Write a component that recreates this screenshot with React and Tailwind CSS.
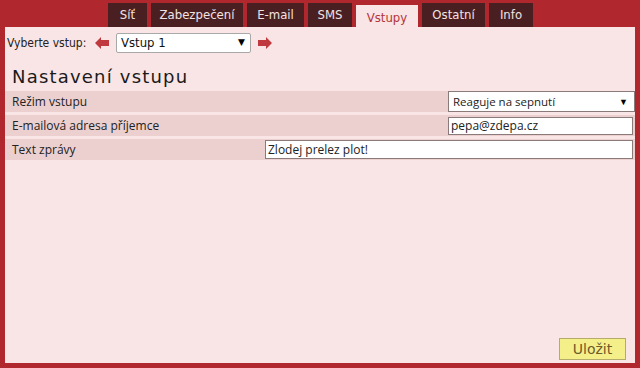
import React from "react";

const tabs = [
  { t: "Síť", w: "w-[39px]" },
  { t: "Zabezpečení", w: "w-[92px]" },
  { t: "E-mail", w: "w-[57px]" },
  { t: "SMS", w: "w-[44px]" },
  { t: "Vstupy", w: "w-[62px]", active: true },
  { t: "Ostatní", w: "w-[63px]" },
  { t: "Info", w: "w-[44px]" },
];

function ArrowLeft() {
  return (
    <svg width="14" height="12" viewBox="0 0 14 12">
      <path d="M0 6 L6 0 L6 3 L14 3 L14 9 L6 9 L6 12 Z" fill="#c0393f" />
    </svg>
  );
}
function ArrowRight() {
  return (
    <svg width="14" height="12" viewBox="0 0 14 12">
      <path d="M14 6 L8 0 L8 3 L0 3 L0 9 L8 9 L8 12 Z" fill="#c0393f" />
    </svg>
  );
}

export default function App() {
  const cond = { fontStretch: "condensed" };
  return (
    <div className="w-[640px] h-[368px] bg-[#b0282e] flex flex-col font-['DejaVu_Sans',sans-serif] text-[#222]">
      <div className="h-[27px] flex items-end pl-[108px] gap-[4px]">
        {tabs.map((x) =>
          x.active ? (
            <div
              key={x.t}
              style={cond}
              className={`${x.w} h-[22px] bg-[#f9e5e5] text-[#b5343c] text-[13px] flex items-center justify-center pt-[3px]`}
            >
              {x.t}
            </div>
          ) : (
            <div
              key={x.t}
              style={cond}
              className={`${x.w} h-[24px] bg-[#4a1f22] text-[#f3e3e3] text-[13px] flex items-center justify-center`}
            >
              {x.t}
            </div>
          )
        )}
      </div>
      <div className="flex-1 mx-[5px] mb-[5px] bg-[#f9e5e5] flex flex-col">
        <div className="flex items-center h-[20px] mt-[6px] pl-[2px]">
          <span style={cond} className="text-[12px] text-[#222] w-[88px]">
            Vyberte vstup:
          </span>
          <ArrowLeft />
          <div className="ml-[7px] w-[135px] h-[20px] bg-white border border-[#a9a9a9] rounded-[2px] flex items-center justify-between pl-[4px] pr-[5px]">
            <span style={cond} className="text-[13px] text-[#111]">Vstup 1</span>
            <span className="text-[9px] text-black">▼</span>
          </div>
          <div className="ml-[7px]">
            <ArrowRight />
          </div>
        </div>
        <div className="mt-[12px] pl-[7px] h-[23px] text-[18px] tracking-[1.2px] text-[#1a1a1a] leading-[23px]">
          Nastavení vstupu
        </div>
        <div className="mt-[3px] flex flex-col gap-[3px] text-[12px] font-['Open_Sans',sans-serif]">
          <div className="h-[21px] bg-[#ecd0d0] flex items-center justify-between pl-[7px]">
            <span>Režim vstupu</span>
            <div className="w-[187px] h-[21px] bg-white border border-[#8a7a7a] flex items-center justify-between pl-[4px] pr-[6px] text-[11.5px]">
              <span>Reaguje na sepnutí</span>
              <span className="text-[9px] text-black">▼</span>
            </div>
          </div>
          <div className="h-[21px] bg-[#ecd0d0] flex items-center justify-between pl-[7px] pr-[2px]">
            <span>E-mailová adresa příjemce</span>
            <div className="w-[185px] h-[18px] bg-white border border-[#8a7a7a] flex items-center pl-[2px]">
              <span>pepa@zdepa.cz</span>
            </div>
          </div>
          <div className="h-[21px] bg-[#ecd0d0] flex items-center justify-between pl-[7px] pr-[2px]">
            <span>Text zprávy</span>
            <div className="w-[368px] h-[19px] bg-white border border-[#8a7a7a] flex items-center pl-[2px]">
              <span>Zlodej prelez plot!</span>
            </div>
          </div>
        </div>
        <div className="mt-auto self-end mr-[9px] mb-[3px] w-[67px] h-[22px] bg-[#f5ef8a] border border-[#b5ac6a] flex items-center justify-center text-[14px] text-[#6e5a2a]">
          Uložit
        </div>
      </div>
    </div>
  );
}
